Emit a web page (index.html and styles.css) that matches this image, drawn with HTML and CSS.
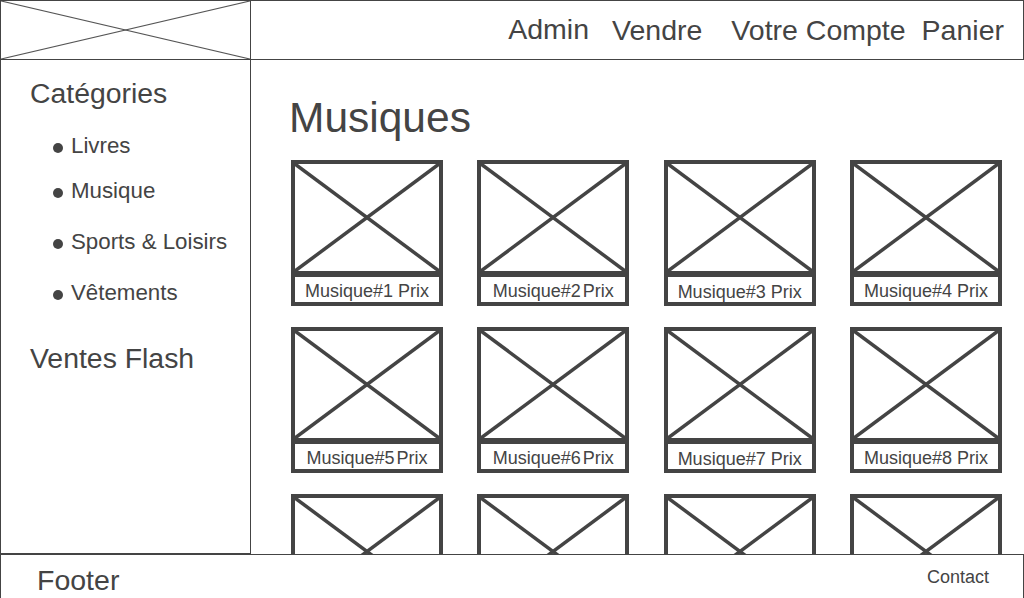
FILE: index.html
```html
<!DOCTYPE html>
<html lang="fr">
<head>
<meta charset="utf-8">
<title>Musiques</title>
<link rel="stylesheet" href="styles.css">
</head>
<body>
<div class="page">
  <header class="header">
    <div class="logo">
      <svg class="ph-svg" viewBox="0 0 249 58" preserveAspectRatio="none">
        <line x1="0" y1="0" x2="249" y2="58"/>
        <line x1="0" y1="58" x2="249" y2="0"/>
      </svg>
    </div>
    <nav class="nav">
      <a class="nav-link nav-admin">Admin</a>
      <a class="nav-link nav-vendre">Vendre</a>
      <a class="nav-link nav-compte">Votre Compte</a>
      <a class="nav-link nav-panier">Panier</a>
    </nav>
  </header>
  <div class="body">
    <aside class="sidebar">
      <h2 class="side-title">Catégories</h2>
      <ul class="cat-list">
        <li>Livres</li>
        <li>Musique</li>
        <li>Sports &amp; Loisirs</li>
        <li>Vêtements</li>
      </ul>
      <h2 class="side-title side-flash">Ventes Flash</h2>
    </aside>
    <main class="main">
      <h1 class="title">Musiques</h1>
      <div class="grid">
        <div class="card"><div class="card-img"><svg class="x-svg" viewBox="0 0 144 107" preserveAspectRatio="none"><line x1="0" y1="0" x2="144" y2="107"/><line x1="0" y1="107" x2="144" y2="0"/></svg></div><div class="card-cap"><span>Musique#1</span><span>Prix</span></div></div>
        <div class="card"><div class="card-img"><svg class="x-svg" viewBox="0 0 144 107" preserveAspectRatio="none"><line x1="0" y1="0" x2="144" y2="107"/><line x1="0" y1="107" x2="144" y2="0"/></svg></div><div class="card-cap tight"><span>Musique#2</span><span>Prix</span></div></div>
        <div class="card"><div class="card-img"><svg class="x-svg" viewBox="0 0 144 107" preserveAspectRatio="none"><line x1="0" y1="0" x2="144" y2="107"/><line x1="0" y1="107" x2="144" y2="0"/></svg></div><div class="card-cap low"><span>Musique#3</span><span>Prix</span></div></div>
        <div class="card"><div class="card-img"><svg class="x-svg" viewBox="0 0 144 107" preserveAspectRatio="none"><line x1="0" y1="0" x2="144" y2="107"/><line x1="0" y1="107" x2="144" y2="0"/></svg></div><div class="card-cap"><span>Musique#4</span><span>Prix</span></div></div>
        <div class="card"><div class="card-img"><svg class="x-svg" viewBox="0 0 144 107" preserveAspectRatio="none"><line x1="0" y1="0" x2="144" y2="107"/><line x1="0" y1="107" x2="144" y2="0"/></svg></div><div class="card-cap tight"><span>Musique#5</span><span>Prix</span></div></div>
        <div class="card"><div class="card-img"><svg class="x-svg" viewBox="0 0 144 107" preserveAspectRatio="none"><line x1="0" y1="0" x2="144" y2="107"/><line x1="0" y1="107" x2="144" y2="0"/></svg></div><div class="card-cap tight"><span>Musique#6</span><span>Prix</span></div></div>
        <div class="card"><div class="card-img"><svg class="x-svg" viewBox="0 0 144 107" preserveAspectRatio="none"><line x1="0" y1="0" x2="144" y2="107"/><line x1="0" y1="107" x2="144" y2="0"/></svg></div><div class="card-cap low"><span>Musique#7</span><span>Prix</span></div></div>
        <div class="card"><div class="card-img"><svg class="x-svg" viewBox="0 0 144 107" preserveAspectRatio="none"><line x1="0" y1="0" x2="144" y2="107"/><line x1="0" y1="107" x2="144" y2="0"/></svg></div><div class="card-cap"><span>Musique#8</span><span>Prix</span></div></div>
        <div class="card"><div class="card-img"><svg class="x-svg" viewBox="0 0 144 107" preserveAspectRatio="none"><line x1="0" y1="0" x2="144" y2="107"/><line x1="0" y1="107" x2="144" y2="0"/></svg></div></div>
        <div class="card"><div class="card-img"><svg class="x-svg" viewBox="0 0 144 107" preserveAspectRatio="none"><line x1="0" y1="0" x2="144" y2="107"/><line x1="0" y1="107" x2="144" y2="0"/></svg></div></div>
        <div class="card"><div class="card-img"><svg class="x-svg" viewBox="0 0 144 107" preserveAspectRatio="none"><line x1="0" y1="0" x2="144" y2="107"/><line x1="0" y1="107" x2="144" y2="0"/></svg></div></div>
        <div class="card"><div class="card-img"><svg class="x-svg" viewBox="0 0 144 107" preserveAspectRatio="none"><line x1="0" y1="0" x2="144" y2="107"/><line x1="0" y1="107" x2="144" y2="0"/></svg></div></div>
      </div>
    </main>
  </div>
  <footer class="footer">
    <span class="footer-title">Footer</span>
    <a class="footer-link">Contact</a>
  </footer>
</div>
</body>
</html>
```

FILE: styles.css
```css
* { box-sizing: border-box; }

html, body {
  margin: 0;
  padding: 0;
  background: #fff;
  overflow: hidden;
}

body {
  font-family: "Liberation Sans", Arial, sans-serif;
  color: #444;
}

.page {
  width: 1024px;
  height: 598px;
  display: flex;
  flex-direction: column;
}

/* Header */
.header {
  height: 60px;
  flex: none;
  display: flex;
  border: 1px solid #444;
}

.logo {
  width: 250px;
  height: 100%;
  border-right: 1px solid #444;
  flex: none;
}

.ph-svg {
  display: block;
  width: 100%;
  height: 100%;
}

.ph-svg line {
  stroke: #555;
  stroke-width: 1.2;
  vector-effect: non-scaling-stroke;
}

.nav {
  margin-left: auto;
  display: flex;
  align-items: center;
  padding-right: 19px;
}

.nav-link {
  font-size: 28.5px;
  line-height: 28px;
  color: #444;
  text-decoration: none;
  margin-top: 0;
}

.nav-admin { margin-top: -2px; }
.nav-vendre { margin-left: 23px; }
.nav-compte { margin-left: 29px; }
.nav-panier { margin-left: 16px; }

/* Body row */
.body {
  height: 494px;
  flex: none;
  display: flex;
  overflow: hidden;
}

.sidebar {
  width: 251px;
  flex: none;
  border-left: 1px solid #444;
  border-right: 1px solid #444;
  border-bottom: 1px solid #444;
  padding: 19px 0 0 29px;
}

.side-title {
  margin: 0;
  font-size: 28.4px;
  line-height: 28px;
  font-weight: normal;
  color: #444;
}

.side-flash { margin-top: 40px; }

.cat-list {
  list-style: none;
  margin: 28px 0 0 0;
  padding: 0 0 0 23px;
}

.cat-list li {
  display: flex;
  align-items: flex-start;
  font-size: 22.3px;
  line-height: 22px;
}

.cat-list li::before {
  content: "";
  width: 10px;
  height: 10px;
  border-radius: 50%;
  background: #444;
  margin: 8px 8px 0 0;
  flex: none;
}

.cat-list li + li { margin-top: 29px; }
.cat-list li:nth-child(2) { margin-top: 23px; }

/* Main */
.main {
  flex: 1;
  padding: 37px 22px 0 40px;
  overflow: hidden;
}

.title {
  margin: 0 0 0 -2px;
  font-size: 42.5px;
  line-height: 42px;
  font-weight: normal;
  color: #444;
}

.grid {
  margin-top: 21px;
  display: grid;
  grid-template-columns: repeat(4, 152px);
  justify-content: space-between;
  row-gap: 21px;
}

.card {
  border: 4px solid #444;
  width: 152px;
}

.card-img {
  height: 113px;
  border-bottom: 6px solid #444;
}

.x-svg {
  display: block;
  width: 100%;
  height: 100%;
}

.x-svg line {
  stroke: #444;
  stroke-width: 3.5;
  vector-effect: non-scaling-stroke;
}

.card-cap {
  height: 25px;
  padding-top: 2px;
  display: flex;
  justify-content: center;
  gap: 5px;
  font-size: 18px;
  line-height: 24px;
  white-space: nowrap;
}

.card-cap.tight { gap: 2px; }
.card-cap.low { padding-top: 3px; }

/* Footer */
.footer {
  height: 44px;
  flex: none;
  border: 1px solid #444;
  border-bottom: none;
  display: flex;
  justify-content: space-between;
  align-items: flex-start;
  padding: 11px 34px 0 35px;
}

.footer-title {
  font-size: 28.5px;
  line-height: 28px;
  margin-left: 1px;
}

.footer-link {
  font-size: 18px;
  line-height: 18px;
  margin-top: 2px;
  color: #444;
}
```
